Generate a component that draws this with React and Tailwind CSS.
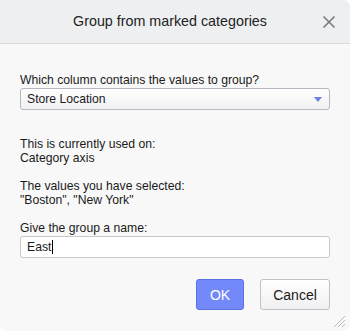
export default function App() {
  return (
    <div className="w-[350px] h-[331px] bg-white" style={{ fontFamily: '"Liberation Sans", Arial, sans-serif' }}>
      <div className="relative w-full h-full bg-[#f8f8f8] rounded-tr-[7px] rounded-b-[7px] overflow-hidden flex flex-col">
        {/* Header */}
        <div className="h-[44px] shrink-0 bg-[#eeeff1] border-b border-[#d9d9dc] flex items-center justify-center relative">
          <span className="text-[14.3px] text-[#222] ml-[-10px]">Group from marked categories</span>
          <button className="absolute right-[14px] top-[15px] w-[14px] h-[14px] text-[#7a7a7a]" aria-label="Close">
            <svg viewBox="0 0 14 14" width="14" height="14" fill="none" stroke="currentColor" strokeWidth="1.6">
              <path d="M1.5 1.5 L12.5 12.5 M12.5 1.5 L1.5 12.5" />
            </svg>
          </button>
        </div>

        {/* Body */}
        <div className="px-[20px] pt-[28px] text-[12.2px] leading-[14px] text-[#1a1a1a] flex flex-col">
          <label className="leading-[16px]">Which column contains the values to group?</label>
          <div className="h-[22px] border border-[#b6b7c0] rounded-[3px] bg-gradient-to-b from-white to-[#f1f1f3] flex items-center justify-between pl-[6px] pr-[7px]">
            <span>Store Location</span>
            <svg width="8" height="5" viewBox="0 0 8 5">
              <path d="M0 0 H8 L4 5 Z" fill="#6a82e0" />
            </svg>
          </div>

          <div className="mt-[27px]">
            <div>This is currently used on:</div>
            <div>Category axis</div>
          </div>

          <div className="mt-[14px]">
            <div>The values you have selected:</div>
            <div>"Boston", "New York"</div>
          </div>

          <label className="mt-[13px] leading-[16px]">Give the group a name:</label>
          <div className="h-[22px] border border-[#c9c9cc] rounded-[3px] bg-white flex items-center pl-[6px]">
            <span>East</span>
            <span className="w-px h-[14px] bg-black ml-px" />
          </div>

          <div className="flex justify-end gap-[16px] mt-[21px]">
            <button className="w-[48px] h-[31px] rounded-[3px] bg-[#7389fa] border border-[#5b70e2] text-white text-[14px]">OK</button>
            <button className="w-[70px] h-[31px] rounded-[3px] bg-gradient-to-b from-white to-[#f0f0f2] border border-[#c2c2c6] text-[#1a1a1a] text-[14px]">Cancel</button>
          </div>
        </div>

        {/* Resize grip */}
        <svg className="absolute right-[4px] bottom-[3px]" width="14" height="14" viewBox="0 0 14 14" stroke="#b9b9b9" strokeWidth="1">
          <path d="M13 2 L2 13 M13 6 L6 13 M13 10 L10 13" />
        </svg>
      </div>
    </div>
  )
}
